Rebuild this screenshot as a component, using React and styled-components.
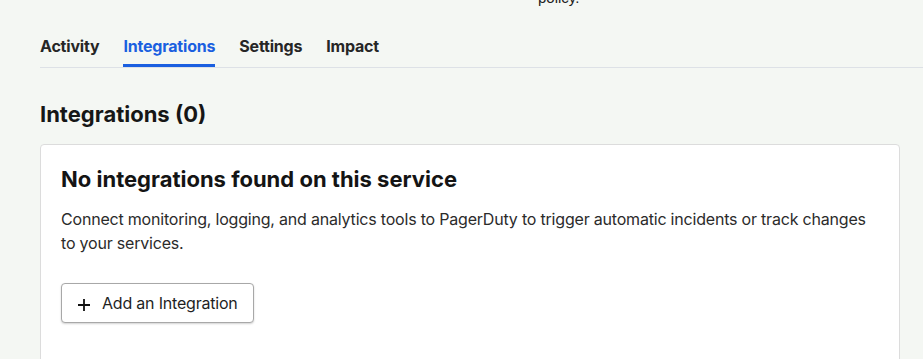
import styled, { createGlobalStyle } from 'styled-components';

const GlobalStyle = createGlobalStyle`
  html, body {
    margin: 0;
    padding: 0;
    background: #f4f7f3;
    font-family: Inter, "Noto Sans", Arial, sans-serif;
    color: #1b1b1b;
  }
  * {
    box-sizing: border-box;
  }
`;

const StPage = styled.div`
  padding: 0 0 0 40px;
  overflow: hidden;
  height: 359px;
`;

const StPolicyNote = styled.div`
  display: flex;
  justify-content: flex-start;
  padding-left: 498px;
  height: 6px;
  overflow: visible;
  font-family: "Liberation Sans", Arial, sans-serif;
  font-size: 15px;
  line-height: 17px;
  color: #222;

  span {
    margin-top: -11px;
  }
`;

const StTabs = styled.nav`
  display: flex;
  gap: 24px;
  margin-top: 26px;
  border-bottom: 1px solid #dde1e6;
`;

const StTab = styled.div`
  font-size: 16px;
  font-weight: 700;
  line-height: 20px;
  padding: 4px 0 8px;
  letter-spacing: -0.2px;
  color: ${(p) => (p.$active ? '#1a5fe0' : '#262626')};
  border-bottom: 3px solid ${(p) => (p.$active ? '#1a5fe0' : 'transparent')};
  cursor: pointer;
`;

const StSectionTitle = styled.h2`
  margin: 32px 0 16px;
  font-size: 22px;
  font-weight: 700;
  line-height: 28px;
  color: #161616;
`;

const StCard = styled.section`
  margin-right: 23px;
  background: #fff;
  border: 1px solid #dcdcdc;
  border-radius: 4px;
  padding: 20px 20px 60px;
`;

const StCardTitle = styled.h3`
  margin: 0 0 14px;
  font-size: 22px;
  font-weight: 700;
  line-height: 28px;
  color: #141414;
`;

const StCardText = styled.p`
  margin: 0 0 28px;
  max-width: 815px;
  font-size: 16px;
  line-height: 24px;
  letter-spacing: -0.2px;
  color: #2b2b2b;
`;

const StButton = styled.button`
  display: flex;
  align-items: center;
  gap: 12px;
  height: 40px;
  padding: 0 15px 0 16px;
  background: #fff;
  border: 1px solid #a8a8a8;
  border-radius: 4px;
  box-shadow: 0 1px 2px rgba(0, 0, 0, 0.18);
  font-family: inherit;
  font-size: 16px;
  letter-spacing: -0.2px;
  color: #1f1f1f;
  cursor: pointer;

  svg {
    margin-top: 4px;
  }
`;

const tabs = ['Activity', 'Integrations', 'Settings', 'Impact'];

function App() {
  return (
    <>
      <GlobalStyle />
      <StPage>
        <StPolicyNote>
          <span>policy.</span>
        </StPolicyNote>
        <StTabs>
          {tabs.map((tab) => (
            <StTab key={tab} $active={tab === 'Integrations'}>
              {tab}
            </StTab>
          ))}
        </StTabs>
        <StSectionTitle>Integrations (0)</StSectionTitle>
        <StCard>
          <StCardTitle>No integrations found on this service</StCardTitle>
          <StCardText>
            Connect monitoring, logging, and analytics tools to PagerDuty to trigger
            automatic incidents or track changes to your services.
          </StCardText>
          <StButton>
            <svg width="12" height="12" viewBox="0 0 12 12" aria-hidden="true">
              <path d="M6 0v12M0 6h12" stroke="#111" strokeWidth="1.8" />
            </svg>
            Add an Integration
          </StButton>
        </StCard>
      </StPage>
    </>
  );
}

export default App;
